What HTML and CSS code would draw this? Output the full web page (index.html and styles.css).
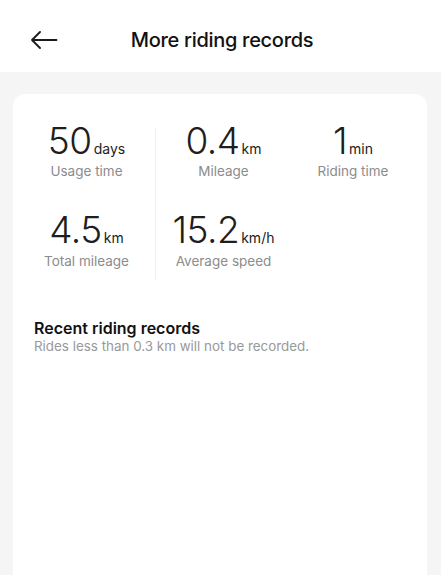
FILE: index.html
```html
<!DOCTYPE html>
<html lang="en">
<head>
<meta charset="utf-8">
<title>More riding records</title>
<link rel="stylesheet" href="styles.css">
</head>
<body>
<header class="topbar">
  <div class="topbar-left">
    <svg class="back" width="27" height="18" viewBox="0 0 27 18" aria-hidden="true">
      <path d="M9 1 L1 9 L9 17 M1 9 H25.5" fill="none" stroke="#1a1a1a" stroke-width="1.8" stroke-linecap="round" stroke-linejoin="round"/>
    </svg>
  </div>
  <h1 class="title">More riding records</h1>
  <div></div>
</header>
<main class="content">
  <section class="card">
    <div class="stats">
      <div class="stat">
        <div class="value"><span class="num">50</span><span class="unit">days</span></div>
        <div class="label">Usage time</div>
      </div>
      <div class="stat mid">
        <div class="value"><span class="num">0.4</span><span class="unit">km</span></div>
        <div class="label">Mileage</div>
      </div>
      <div class="stat">
        <div class="value"><span class="num">1</span><span class="unit">min</span></div>
        <div class="label">Riding time</div>
      </div>
      <div class="stat row2">
        <div class="value"><span class="num">4.5</span><span class="unit">km</span></div>
        <div class="label">Total mileage</div>
      </div>
      <div class="stat mid row2">
        <div class="value"><span class="num">15.2</span><span class="unit">km/h</span></div>
        <div class="label">Average speed</div>
      </div>
      <div class="stat row2"></div>
    </div>
    <div class="recent">
      <h2 class="recent-title">Recent riding records</h2>
      <p class="recent-note">Rides less than 0.3 km will not be recorded.</p>
    </div>
  </section>
</main>
</body>
</html>
```
FILE: styles.css
```css
* { box-sizing: border-box; }
html, body { margin: 0; padding: 0; }
body {
  font-family: Inter, "Noto Sans", "Liberation Sans", sans-serif;
  background: #f5f5f5;
  color: #222;
  height: 575px;
  overflow: hidden;
}
.topbar {
  height: 72px;
  background: #fff;
  display: grid;
  grid-template-columns: 1fr auto 1fr;
  align-items: center;
  padding-top: 7px;
}
.topbar-left {
  padding-left: 31px;
  display: flex;
  align-items: center;
}
.back { display: block; }
.title {
  margin: 0 0 0 3px;
  font-size: 20px;
  font-weight: 500;
  letter-spacing: -0.3px;
  color: #111;
  line-height: 24px;
}
.content {
  padding: 22px 14px 0 13px;
}
.card {
  background: #fff;
  border-radius: 12px 12px 0 0;
  min-height: 490px;
  padding: 34px 12px 0 5px;
}
.stats {
  display: grid;
  grid-template-columns: 137px 136px 1fr;
}
.stat {
  display: flex;
  flex-direction: column;
  align-items: center;
}
.stat.mid { border-left: 1px solid #efefef; }
.stat.row2 { padding-top: 36px; padding-bottom: 9px; }
.stat.row2 .label { margin-top: 8px; }
.value {
  display: flex;
  align-items: baseline;
  height: 26px;
  line-height: 26px;
  white-space: nowrap;
}
.num {
  font-size: 37px;
  font-weight: 350;
  color: #1e1e1e;
  letter-spacing: -0.5px;
}
.unit {
  font-size: 14px;
  line-height: 0;
  color: #222;
  margin-left: 2px;
}
.label {
  margin-top: 7px;
  font-size: 13.5px;
  line-height: 20px;
  color: #8c8c8c;
}
.recent {
  padding: 38px 0 0 16px;
}
.recent-title {
  margin: 0;
  font-size: 16px;
  font-weight: 600;
  line-height: 20px;
  color: #111;
}
.recent-note {
  margin: 0;
  font-size: 13.4px;
  line-height: 16px;
  color: #999;
}
```
